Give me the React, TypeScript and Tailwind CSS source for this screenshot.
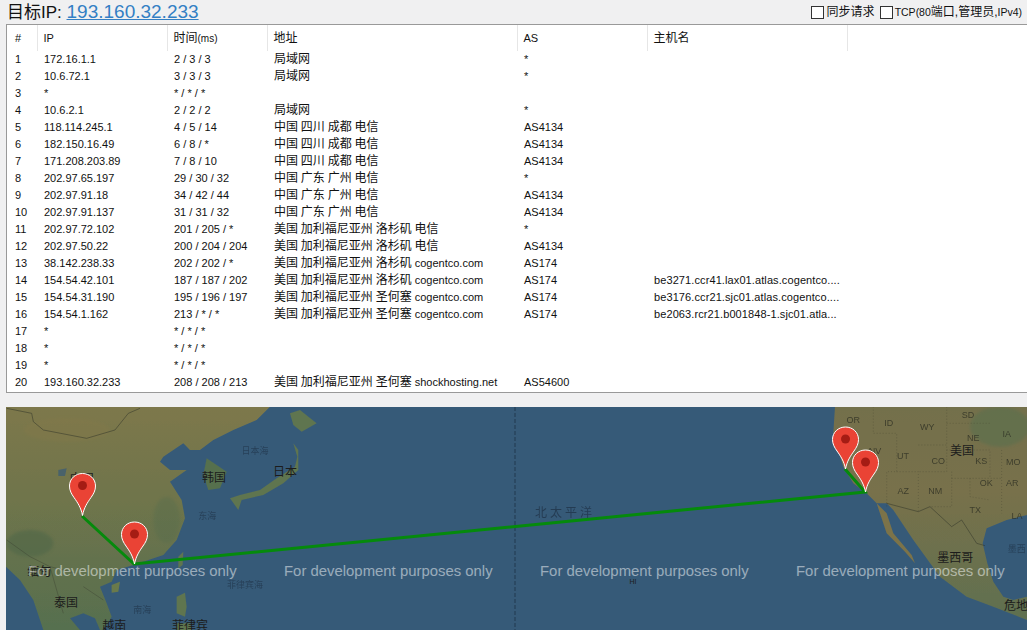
const hops = [
  { n: 1, ip: "172.16.1.1", time: "2 / 3 / 3", zh: "局域网", en: "", as: "*", host: "" },
  { n: 2, ip: "10.6.72.1", time: "3 / 3 / 3", zh: "局域网", en: "", as: "*", host: "" },
  { n: 3, ip: "*", time: "* / * / *", zh: "", en: "", as: "", host: "" },
  { n: 4, ip: "10.6.2.1", time: "2 / 2 / 2", zh: "局域网", en: "", as: "*", host: "" },
  { n: 5, ip: "118.114.245.1", time: "4 / 5 / 14", zh: "中国 四川 成都 电信", en: "", as: "AS4134", host: "" },
  { n: 6, ip: "182.150.16.49", time: "6 / 8 / *", zh: "中国 四川 成都 电信", en: "", as: "AS4134", host: "" },
  { n: 7, ip: "171.208.203.89", time: "7 / 8 / 10", zh: "中国 四川 成都 电信", en: "", as: "AS4134", host: "" },
  { n: 8, ip: "202.97.65.197", time: "29 / 30 / 32", zh: "中国 广东 广州 电信", en: "", as: "*", host: "" },
  { n: 9, ip: "202.97.91.18", time: "34 / 42 / 44", zh: "中国 广东 广州 电信", en: "", as: "AS4134", host: "" },
  { n: 10, ip: "202.97.91.137", time: "31 / 31 / 32", zh: "中国 广东 广州 电信", en: "", as: "AS4134", host: "" },
  { n: 11, ip: "202.97.72.102", time: "201 / 205 / *", zh: "美国 加利福尼亚州 洛杉矶 电信", en: "", as: "*", host: "" },
  { n: 12, ip: "202.97.50.22", time: "200 / 204 / 204", zh: "美国 加利福尼亚州 洛杉矶 电信", en: "", as: "AS4134", host: "" },
  { n: 13, ip: "38.142.238.33", time: "202 / 202 / *", zh: "美国 加利福尼亚州 洛杉矶", en: "cogentco.com", as: "AS174", host: "" },
  { n: 14, ip: "154.54.42.101", time: "187 / 187 / 202", zh: "美国 加利福尼亚州 洛杉矶", en: "cogentco.com", as: "AS174", host: "be3271.ccr41.lax01.atlas.cogentco...." },
  { n: 15, ip: "154.54.31.190", time: "195 / 196 / 197", zh: "美国 加利福尼亚州 圣何塞", en: "cogentco.com", as: "AS174", host: "be3176.ccr21.sjc01.atlas.cogentco...." },
  { n: 16, ip: "154.54.1.162", time: "213 / * / *", zh: "美国 加利福尼亚州 圣何塞", en: "cogentco.com", as: "AS174", host: "be2063.rcr21.b001848-1.sjc01.atla..." },
  { n: 17, ip: "*", time: "* / * / *", zh: "", en: "", as: "", host: "" },
  { n: 18, ip: "*", time: "* / * / *", zh: "", en: "", as: "", host: "" },
  { n: 19, ip: "*", time: "* / * / *", zh: "", en: "", as: "", host: "" },
  { n: 20, ip: "193.160.32.233", time: "208 / 208 / 213", zh: "美国 加利福尼亚州 圣何塞", en: "shockhosting.net", as: "AS54600", host: "" },
];

function Pin({ x, y }: { x: number; y: number }) {
  // x, y is the tip of the marker
  return (
    <g transform={`translate(${x} ${y})`}>
      <path
        d="M0 0C-1.5-8-5-13-8.5-18C-11-21.5-13-25-13-29.5C-13-36.7-7.2-42 0-42C7.2-42 13-36.7 13-29.5C13-25 11-21.5 8.5-18C5-13 1.5-8 0 0Z"
        fill="#ea4335"
        stroke="#fff"
        strokeWidth="1"
      />
      <circle cx="0" cy="-30" r="4.5" fill="#a51c14" />
    </g>
  );
}

function Lbl({ x, y, t, c = "#1c1c1c", s = 36, o = 1 }: { x: number; y: number; t: string; c?: string; s?: number; o?: number }) {
  return (
    <text x={x} y={y} fontSize={s} fill={c} opacity={o} textAnchor="middle" dominantBaseline="middle">
      {t}
    </text>
  );
}

function MapView() {
  return (
    <svg
      viewBox="6 407 1021 223"
      className="block w-full h-full font-['Liberation_Sans','Noto_Sans_CJK_SC',sans-serif]"
    >
      <defs>
        <linearGradient id="asia" x1="0" y1="0" x2="0" y2="1">
          <stop offset="0" stopColor="#7d784c" />
          <stop offset="0.45" stopColor="#6e744c" />
          <stop offset="1" stopColor="#566f4f" />
        </linearGradient>
        <linearGradient id="na" x1="0" y1="0" x2="0" y2="1">
          <stop offset="0" stopColor="#736f4c" />
          <stop offset="0.4" stopColor="#78714b" />
          <stop offset="1" stopColor="#5f7050" />
        </linearGradient>
        <filter id="soft" x="-5%" y="-5%" width="110%" height="110%">
          <feGaussianBlur stdDeviation="0.9" />
        </filter>
        <filter id="softer" x="-30%" y="-30%" width="160%" height="160%">
          <feGaussianBlur stdDeviation="5" />
        </filter>
      </defs>
      <rect x="6" y="407" width="1021" height="223" fill="#365a78" />

      <g transform="translate(0 400) scale(0.3333)">
        <g filter="url(#soft)">
          <path
            fill="url(#asia)"
            d="M18 20L810 20L770 60L700 90L640 120L600 150L570 150L550 130L490 170L480 185L510 210L560 210L510 245L545 300L555 355L530 420L490 465L400 495L350 510L335 545L300 560L320 610L335 650L310 690L130 690L100 600L60 540L18 500Z"
          />
          <path fill="#56704d" d="M620 175L680 215L660 265L625 270L610 225Z" />
          <path fill="#5f7450" d="M880 130L892 170L885 200L830 235L780 270L720 285L690 295L715 330L725 300L790 285L850 250L895 210L895 150Z" />
          <path fill="#5f7450" d="M870 40L900 30L950 70L905 95L880 75Z" />
          <path fill="#5e7450" d="M535 470L550 455L548 495L535 505Z" />
          <path fill="#6a7a4c" d="M335 555L360 545L355 575L335 578Z" />
          <path fill="#5e7450" d="M530 590L555 578L560 620L555 650L530 640Z" />
          <path fill="#5e7450" d="M530 670L570 670L575 690L530 690Z" />
          <path fill="#365a78" d="M210 655L240 690L300 690L285 655L250 640Z" />
          <path fill="#365a78" d="M175 210L200 205L195 228L175 228Z" opacity="0.7" />
        </g>
        <ellipse cx="200" cy="90" rx="130" ry="35" fill="#85794a" opacity="0.35" filter="url(#softer)" />
        <ellipse cx="90" cy="430" rx="70" ry="40" fill="#4c6547" opacity="0.5" filter="url(#softer)" />
        <ellipse cx="500" cy="360" rx="40" ry="70" fill="#566d4e" opacity="0.4" filter="url(#softer)" />
        <path
          d="M20 25L95 40L100 65L130 90L260 115L345 90L385 40L420 25"
          fill="none"
          stroke="#33362a"
          strokeWidth="2"
          opacity="0.8"
        />
        <path d="M20 420L90 470L150 500L230 520M150 500L190 640M250 560L310 600" fill="none" stroke="#33362a" strokeWidth="2" opacity="0.5" />
        <Lbl x={245} y={240} t="中国" />
        <Lbl x={765} y={155} t="日本海" c="#1f3247" s={27} o={0.65} />
        <Lbl x={855} y={218} t="日本" />
        <Lbl x={642} y={236} t="韩国" />
        <Lbl x={622} y={350} t="东海" c="#1f3247" s={27} o={0.65} />
        <Lbl x={735} y={558} t="菲律宾海" c="#1f3247" s={27} o={0.65} />
        <Lbl x={427} y={632} t="南海" c="#1f3247" s={27} o={0.65} />
        <Lbl x={118} y={520} t="缅甸" />
        <Lbl x={198} y={612} t="泰国" />
        <Lbl x={343} y={680} t="越南" />
        <Lbl x={570} y={680} t="菲律宾" />
      </g>

      <g transform="translate(780 400) scale(0.3333)">
        <g filter="url(#soft)">
          <path
            fill="url(#na)"
            d="M165 20L741 20L741 345L680 360L620 385L608 430L622 490L640 545L670 590L700 600L741 590L741 660L640 620L560 590L480 530L400 420L340 330L320 310L290 310L260 280L220 250L190 200L160 100Z"
          />
          <path fill="#7c7349" d="M290 310L320 400L375 455L405 490L395 465L340 400L320 340Z" />
        </g>
        <ellipse cx="660" cy="80" rx="90" ry="60" fill="#5a6f4e" opacity="0.6" filter="url(#softer)" />
        <path
          d="M320 310L415 335L450 320L515 380L545 360L590 430L615 437"
          fill="none"
          stroke="#33362a"
          strokeWidth="2"
          opacity="0.8"
        />
        <path
          d="M280 20L280 100L350 100L350 215L320 215L320 320M350 215L415 215L415 335M415 135L500 135L500 215L415 215M500 20L500 135M500 70L630 70M500 150L630 150L630 230M515 215L515 320L450 320M515 235L665 235M570 235L570 290L630 300M665 150L665 340"
          fill="none"
          stroke="#3a3a2a"
          strokeWidth="2"
          strokeDasharray="3 6"
          opacity="0.45"
        />
        {[
          [220, 63, "OR"], [326, 72, "ID"], [442, 84, "WY"], [564, 48, "SD"], [580, 117, "NE"],
          [680, 105, "IA"], [285, 155, "NV"], [369, 171, "UT"], [475, 186, "CO"], [604, 186, "KS"],
          [700, 189, "MO"], [370, 274, "AZ"], [466, 274, "NM"], [619, 250, "OK"], [697, 252, "AR"],
          [586, 331, "TX"], [711, 351, "LA"],
        ].map(([x, y, t]) => (
          <Lbl key={t as string} x={x as number} y={y as number} t={t as string} c="#2b2d22" s={27} o={0.75} />
        ))}
        <Lbl x={546} y={155} t="美国" />
        <Lbl x={526} y={478} t="墨西哥" />
        <Lbl x={710} y={450} t="墨西" c="#1f3247" s={27} o={0.65} />
        <Lbl x={708} y={622} t="危地" />
      </g>

      <line x1="515" y1="407" x2="515" y2="630" stroke="#21384f" strokeWidth="1" strokeDasharray="4 2" />
      <text x="565" y="517" fontSize="12" fill="#1f3247" opacity="0.75" textAnchor="middle" letterSpacing="3">
        北太平洋
      </text>
      <text x="633" y="584" fontSize="7" fill="#1c1c1c" textAnchor="middle">HI</text>

      <polyline points="82,516 134,564 865,492 845,469" fill="none" stroke="#058a0c" strokeWidth="3" />

      {[28, 284, 540, 796].map((x) => (
        <text key={x} x={x} y="576" fontSize="14.9" fill="#fff" fillOpacity="0.5">
          For development purposes only
        </text>
      ))}

      <Pin x={82.5} y={515.5} />
      <Pin x={134.5} y={564} />
      <Pin x={845.5} y={469} />
      <Pin x={865.5} y={492} />
    </svg>
  );
}

export default function App() {
  return (
    <div className="h-[630px] w-[1027px] overflow-hidden bg-[#f0f0f1] font-['Liberation_Sans','Noto_Sans_CJK_SC',sans-serif] text-[#111]">
      <div className="flex h-6 items-center justify-between pl-[7px] pr-[5px]">
        <div className="text-[17px] leading-6">
          目标IP: <a href="#" className="text-[19px] text-[#337fc4] underline">193.160.32.233</a>
        </div>
        <div className="flex items-center text-xs">
          <input type="checkbox" className="h-[13px] w-[13px] appearance-none border border-[#333] bg-white" />
          <span className="ml-[3px]">同步请求</span>
          <input type="checkbox" className="ml-[5px] h-[13px] w-[13px] appearance-none border border-[#333] bg-white" />
          <span className="ml-[2px]"><span className="text-[10.5px]">TCP(80</span>端口,管理员,<span className="text-[10.5px]">IPv4)</span></span>
        </div>
      </div>

      <div className="ml-[6px] h-[369px] border border-r-0 border-[#999] bg-white">
        <table className="table-fixed border-collapse text-[11px] leading-[17px]">
          <colgroup>
            <col className="w-[30px]" />
            <col className="w-[130px]" />
            <col className="w-[100px]" />
            <col className="w-[250px]" />
            <col className="w-[130px]" />
            <col className="w-[200px]" />
          </colgroup>
          <thead>
            <tr className="h-[26px]">
              <th className="pl-2 text-left font-normal">#</th>
              <th className="border-l border-[#e6e6e6] pl-[6px] text-left font-normal">IP</th>
              <th className="border-l border-[#e6e6e6] pl-[6px] text-left font-normal"><span className="text-xs">时间</span><span className="text-[10px]">(ms)</span></th>
              <th className="border-l border-[#e6e6e6] pl-[6px] text-left text-xs font-normal">地址</th>
              <th className="border-l border-[#e6e6e6] pl-[6px] text-left font-normal">AS</th>
              <th className="border-x border-[#e6e6e6] pl-[6px] text-left text-xs font-normal">主机名</th>
            </tr>
          </thead>
          <tbody>
            {hops.map((h) => (
              <tr key={h.n} className="h-[17px]">
                <td className="pl-2">{h.n}</td>
                <td className="pl-[7px]">{h.ip}</td>
                <td className="pl-[7px]">{h.time}</td>
                <td className="pl-[7px] whitespace-nowrap">
                  <span className="text-xs [word-spacing:-0.5px]">{h.zh}</span>
                  {h.en && " " + h.en}
                </td>
                <td className="pl-[7px]">{h.as}</td>
                <td className="pl-[7px] whitespace-nowrap tracking-[0.1px]">{h.host}</td>
              </tr>
            ))}
          </tbody>
        </table>
      </div>

      <div className="ml-[6px] mt-[14px] h-[223px]">
        <MapView />
      </div>
    </div>
  );
}
